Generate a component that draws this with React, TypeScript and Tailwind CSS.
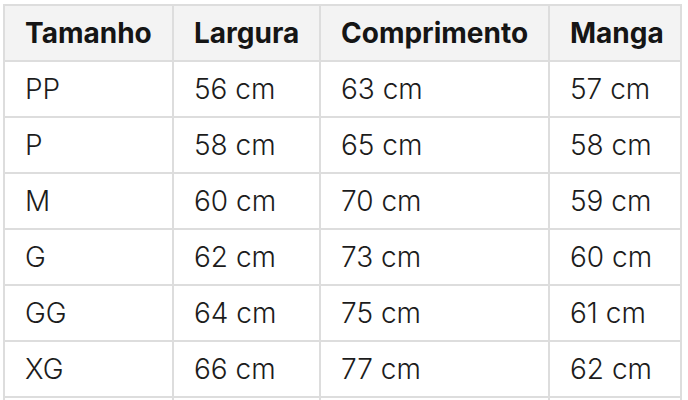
const rows = [
  ["PP", "56 cm", "63 cm", "57 cm"],
  ["P", "58 cm", "65 cm", "58 cm"],
  ["M", "60 cm", "70 cm", "59 cm"],
  ["G", "62 cm", "73 cm", "60 cm"],
  ["GG", "64 cm", "75 cm", "61 cm"],
  ["XG", "66 cm", "77 cm", "62 cm"],
];

const headers = ["Tamanho", "Largura", "Comprimento", "Manga"];

export default function App() {
  return (
    <div className="h-[400px] w-[688px] overflow-hidden bg-white pl-[3px] pt-[4px] font-[Inter,sans-serif]">
      <div className="grid w-[679px] grid-cols-[169px_147px_229px_132px] border-l-2 border-t-2 border-[#dddddd]">
        {headers.map((h) => (
          <div
            key={h}
            className="flex h-[56px] items-center border-b-2 border-r-2 border-[#dddddd] bg-[#f3f3f3] pl-[20px] text-[28px] font-bold text-[#151515]"
          >
            {h}
          </div>
        ))}
        {rows.map((row) =>
          row.map((cell, i) => (
            <div
              key={row[0] + i}
              className="flex h-[56px] items-center border-b-2 border-r-2 border-[#dddddd] pl-[20px] text-[28px] font-light text-[#1c1c1c]"
            >
              {cell}
            </div>
          ))
        )}
        {/* next row, cut off at the window edge */}
        <div className="h-[56px] border-r-2 border-[#dddddd]" />
        <div className="h-[56px] border-r-2 border-[#dddddd]" />
        <div className="h-[56px] border-r-2 border-[#dddddd]" />
        <div className="h-[56px] border-r-2 border-[#dddddd]" />
      </div>
    </div>
  );
}
